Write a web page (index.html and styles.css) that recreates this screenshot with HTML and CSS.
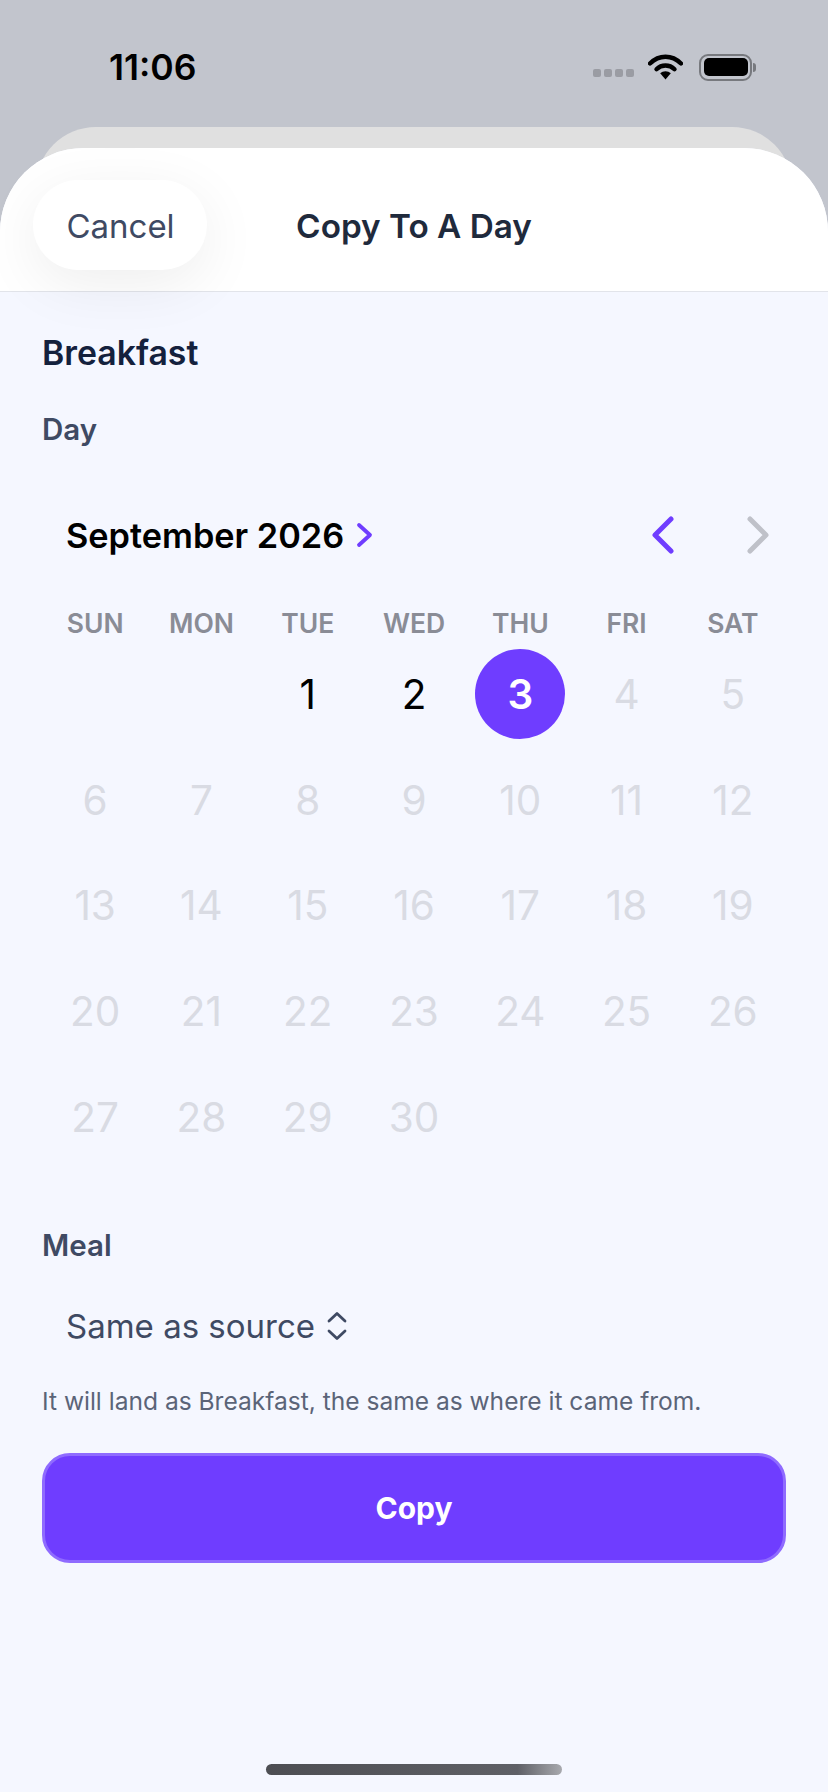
FILE: index.html
```html
<!DOCTYPE html>
<html lang="en">
<head>
  <meta charset="UTF-8">
  <meta name="viewport" content="width=device-width, initial-scale=1.0">
  <title>Copy To A Day</title>
  <link rel="stylesheet" href="styles.css">
</head>
<body>
  <div class="status">
    <span class="time">11:06</span>
    <div class="status-icons">
      <div class="signal"><i></i><i></i><i></i><i></i></div>
      <svg class="wifi" width="35" height="26" viewBox="0 0 35 26">
        <path d="M2 9.5C11 0.5 24 0.5 33 9.5" fill="none" stroke="#000" stroke-width="4.4" stroke-linecap="round"/>
        <path d="M8.5 15.2C13.5 10.2 21.5 10.2 26.5 15.2" fill="none" stroke="#000" stroke-width="4.4" stroke-linecap="round"/>
        <path d="M12.2 19.3C15 16.6 20 16.6 22.8 19.3L17.5 25.5Z" fill="#000"/>
      </svg>
      <div class="battery"><div class="battery-fill"></div></div>
      <div class="battery-cap"></div>
    </div>
  </div>

  <div class="back-sheet"></div>

  <div class="sheet">
    <div class="header">
      <button class="cancel">Cancel</button>
      <h1 class="title">Copy To A Day</h1>
    </div>

    <div class="content">
      <h2 class="meal-name">Breakfast</h2>
      <div class="label day-label">Day</div>

      <div class="month-bar">
        <span class="month">September 2026</span>
        <svg class="month-arrow" width="18" height="26" viewBox="0 0 18 26">
          <path d="M3 3L14 13L3 23" fill="none" stroke="#6f3dff" stroke-width="3.8" stroke-linecap="round" stroke-linejoin="round"/>
        </svg>
        <div class="month-nav">
          <svg width="24" height="38" viewBox="0 0 24 38">
            <path d="M20 3L4 19L20 35" fill="none" stroke="#6f3dff" stroke-width="5" stroke-linecap="round" stroke-linejoin="round"/>
          </svg>
          <svg width="24" height="38" viewBox="0 0 24 38">
            <path d="M4 3L20 19L4 35" fill="none" stroke="#bfc1c9" stroke-width="5" stroke-linecap="round" stroke-linejoin="round"/>
          </svg>
        </div>
      </div>

      <div class="weekdays">
        <span>SUN</span><span>MON</span><span>TUE</span><span>WED</span><span>THU</span><span>FRI</span><span>SAT</span>
      </div>

      <div class="days">
        <span></span><span></span>
        <span class="day open">1</span>
        <span class="day open">2</span>
        <span class="day selected">3</span>
        <span class="day">4</span>
        <span class="day">5</span>
        <span class="day">6</span>
        <span class="day">7</span>
        <span class="day">8</span>
        <span class="day">9</span>
        <span class="day">10</span>
        <span class="day">11</span>
        <span class="day">12</span>
        <span class="day">13</span>
        <span class="day">14</span>
        <span class="day">15</span>
        <span class="day">16</span>
        <span class="day">17</span>
        <span class="day">18</span>
        <span class="day">19</span>
        <span class="day">20</span>
        <span class="day">21</span>
        <span class="day">22</span>
        <span class="day">23</span>
        <span class="day">24</span>
        <span class="day">25</span>
        <span class="day">26</span>
        <span class="day">27</span>
        <span class="day">28</span>
        <span class="day">29</span>
        <span class="day">30</span>
      </div>

      <div class="label meal-label">Meal</div>
      <div class="picker">
        <span>Same as source</span>
        <svg width="22" height="30" viewBox="0 0 22 30">
          <path d="M3 10L11 2.5L19 10M3 20L11 27.5L19 20" fill="none" stroke="#3f4a63" stroke-width="2.8" stroke-linecap="round" stroke-linejoin="round"/>
        </svg>
      </div>
      <p class="hint">It will land as Breakfast, the same as where it came from.</p>

      <button class="copy">Copy</button>
    </div>

    <div class="home-bar"></div>
  </div>
</body>
</html>
```

FILE: styles.css
```css
* {
  box-sizing: border-box;
}

body {
  margin: 0;
  width: 828px;
  height: 1792px;
  overflow: hidden;
  display: flex;
  flex-direction: column;
  background-color: #c2c5cd;
  font-family: Inter, "Noto Sans", sans-serif;
}

.status {
  height: 127px;
  flex-shrink: 0;
  display: flex;
  justify-content: space-between;
  align-items: flex-start;
  padding: 48px 72px 0 109px;
}

.time {
  font-size: 35.5px;
  font-weight: 600;
  line-height: 40px;
  color: #000;
}

.status-icons {
  display: flex;
  align-items: center;
  height: 26px;
  margin-top: 6px;
}

.signal {
  display: flex;
  gap: 3px;
  margin: 11px 14px 0 0;
}

.signal i {
  width: 8px;
  height: 8px;
  border-radius: 2px;
  background-color: #9a9ca3;
}

.wifi {
  margin-right: 16px;
}

.battery {
  width: 53px;
  height: 27px;
  border: 2.5px solid #77797e;
  border-radius: 9px;
  padding: 2.5px;
}

.battery-fill {
  height: 100%;
  background-color: #000;
  border-radius: 5px;
}

.battery-cap {
  width: 3px;
  height: 9px;
  margin-left: 1px;
  background-color: #77797e;
  border-radius: 0 3px 3px 0;
}

.back-sheet {
  height: 60px;
  flex-shrink: 0;
  margin: 0 36px -39px;
  background-color: #e0e0e0;
  border-radius: 70px 70px 0 0;
}

.sheet {
  flex: 1;
  display: flex;
  flex-direction: column;
  background-color: #f5f7ff;
  border-radius: 84px 84px 0 0;
  position: relative;
}

.header {
  height: 144px;
  flex-shrink: 0;
  display: grid;
  grid-template-columns: 1fr auto 1fr;
  align-items: center;
  padding: 0 33px 0;
  background-color: #fff;
  border-radius: 84px 84px 0 0;
  border-bottom: 1px solid #e2e4ea;
}

.cancel {
  justify-self: start;
  width: 174px;
  height: 90px;
  margin-top: 11px;
  padding: 0 0 0 1px;
  border: none;
  border-radius: 45px;
  background-color: #fff;
  box-shadow: 0 14px 60px rgba(0, 0, 0, 0.07);
  font-family: inherit;
  font-size: 33px;
  line-height: 92px;
  color: #3f4a63;
}

.title {
  margin: 12px 0 0;
  font-size: 33.3px;
  font-weight: 600;
  color: #1f2a3c;
}

.content {
  flex: 1;
  padding: 41px 42px 0;
}

.meal-name {
  margin: 0;
  font-size: 33.8px;
  font-weight: 600;
  line-height: 40px;
  color: #14213d;
}

.label {
  font-size: 29.5px;
  font-weight: 600;
  line-height: 36px;
  color: #3f4a63;
}

.day-label {
  margin-top: 38px;
}

.month-bar {
  display: flex;
  align-items: center;
  height: 40px;
  margin-top: 68px;
  padding: 0 16px 0 24px;
}

.month {
  font-size: 34.3px;
  font-weight: 600;
  color: #000;
}

.month-arrow {
  margin-left: 12px;
}

.month-nav {
  display: flex;
  gap: 71px;
  margin-left: auto;
}

.weekdays {
  display: grid;
  grid-template-columns: repeat(7, 1fr);
  margin-top: 51px;
  font-size: 26.5px;
  font-weight: 600;
  line-height: 34px;
  text-align: center;
  color: #8a8c96;
}

.days {
  display: grid;
  grid-template-columns: repeat(7, 1fr);
  grid-auto-rows: 105.8px;
  margin-top: 1px;
}

.day {
  display: flex;
  justify-content: center;
  align-items: center;
  padding-top: 1px;
  font-size: 40.5px;
  color: #d9dbe3;
}

.day.open {
  color: #000;
}

.day.selected {
  width: 90px;
  height: 90px;
  justify-self: center;
  align-self: center;
  border-radius: 50%;
  background-color: #6f3dff;
  color: #fff;
  font-weight: 600;
}

.meal-label {
  margin-top: 57px;
}

.picker {
  display: flex;
  align-items: center;
  gap: 11px;
  margin-top: 42px;
  padding-left: 24px;
  height: 42px;
  font-size: 33px;
  color: #3f4a63;
}

.hint {
  margin: 38px 0 0;
  font-size: 24.55px;
  line-height: 32px;
  color: #5b6478;
}

.copy {
  display: block;
  width: 100%;
  height: 110px;
  margin-top: 36px;
  border: 3px solid #8f6bff;
  border-radius: 28px;
  background-color: #6f3dff;
  font-family: inherit;
  font-size: 30px;
  font-weight: 700;
  color: #fff;
}

.home-bar {
  width: 296px;
  height: 11px;
  flex-shrink: 0;
  margin: 0 auto 17px;
  border-radius: 6px;
  background: linear-gradient(90deg, #4d4e53 0%, #5f6066 85%, #a8a9ae 100%);
}
```
